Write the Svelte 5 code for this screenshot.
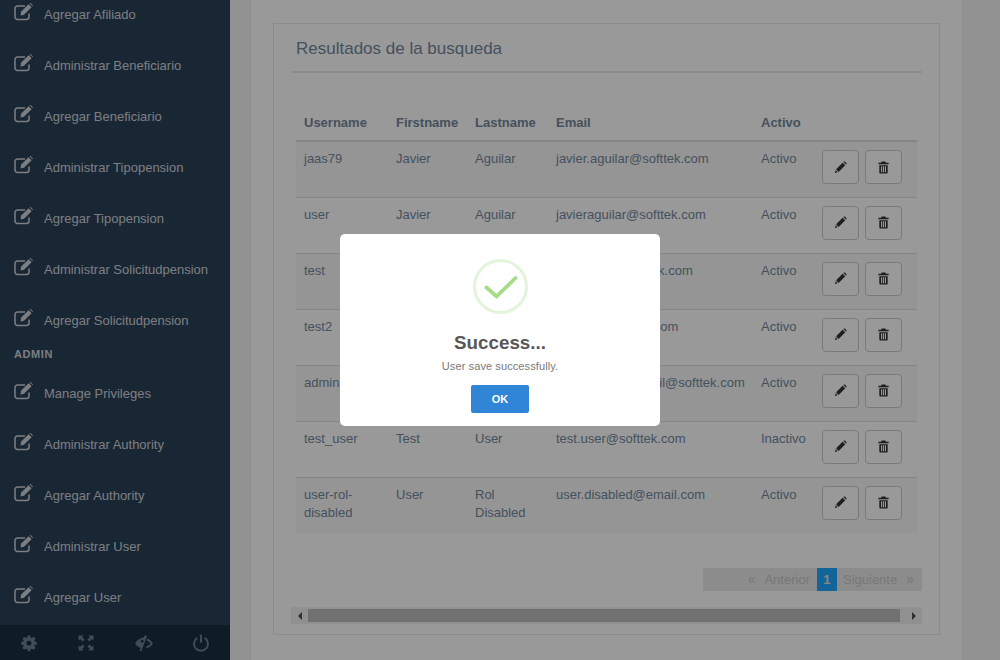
<script lang="ts">
	const topItems = [
		'Agregar Afiliado',
		'Administrar Beneficiario',
		'Agregar Beneficiario',
		'Administrar Tipopension',
		'Agregar Tipopension',
		'Administrar Solicitudpension',
		'Agregar Solicitudpension'
	];
	const adminItems = [
		'Manage Privileges',
		'Administrar Authority',
		'Agregar Authority',
		'Administrar User',
		'Agregar User'
	];
	const users = [
		{ username: 'jaas79', first: 'Javier', last: 'Aguilar', email: 'javier.aguilar@softtek.com', active: 'Activo' },
		{ username: 'user', first: 'Javier', last: 'Aguilar', email: 'javieraguilar@softtek.com', active: 'Activo' },
		{ username: 'test', first: 'Test', last: 'Test', email: 'test.tester@softtek.com', active: 'Activo' },
		{ username: 'test2', first: 'Test', last: 'Test', email: 'test2ab@softtek.com', active: 'Activo' },
		{ username: 'admin', first: 'Admin', last: 'Admin', email: 'administrator.email@softtek.com', active: 'Activo' },
		{ username: 'test_user', first: 'Test', last: 'User', email: 'test.user@softtek.com', active: 'Inactivo' },
		{ username: 'user-rol-disabled', first: 'User', last: 'Rol Disabled', email: 'user.disabled@email.com', active: 'Activo' }
	];
</script>

{#snippet editIcon()}
	<svg class="nav-icon" viewBox="0 0 20 18" aria-hidden="true">
		<path d="M15 10.5V14a2.5 2.5 0 0 1-2.5 2.5h-9A2.5 2.5 0 0 1 1 14V5.5A2.5 2.5 0 0 1 3.5 3H11" fill="none" stroke="currentColor" stroke-width="1.5" />
		<path d="M7 8.8 14.6 1.2 17.6 4.2 10 11.8 6.6 12.4Z" fill="currentColor" />
		<path d="M15.6.2 16.3-.3 18.8 2.2 18.5 3.2Z" fill="currentColor" />
	</svg>
{/snippet}

<div class="page">
	<aside class="sidebar">
		<nav class="nav">
			{#each topItems as item}
				<a class="nav-item" href="#top">{@render editIcon()}<span>{item}</span></a>
			{/each}
			<div class="nav-title">ADMIN</div>
			{#each adminItems as item}
				<a class="nav-item" href="#top">{@render editIcon()}<span>{item}</span></a>
			{/each}
		</nav>
		<div class="footer">
			<svg viewBox="0 0 24 24" aria-hidden="true">
				<path fill="currentColor" fill-rule="evenodd" d="M10 1h4l.6 3.1 1.7.7L19 3l3 3-1.8 2.7.7 1.7L24 11v4l-3.1.6-.7 1.7L22 20l-3 3-2.7-1.8-1.7.7L14 25h-4l-.6-3.1-1.7-.7L5 23l-3-3 1.8-2.7-.7-1.7L0 15v-4l3.1-.6.7-1.7L2 6l3-3 2.7 1.8 1.7-.7ZM12 9.2a3.8 3.8 0 1 0 0 7.6 3.8 3.8 0 0 0 0-7.6Z" transform="translate(1.5 1) scale(.875)" />
			</svg>
			<svg viewBox="0 0 24 24" aria-hidden="true">
				<path fill="currentColor" d="M2 2h7L6.8 4.2 10 7.4 7.4 10 4.2 6.8 2 9ZM22 2v7l-2.200-2.200L16.600 10 14 7.400 17.200 4.200 15 2ZM2 22v-7l2.200 2.200L7.400 14 10 16.600 6.800 19.800 9 22ZM22 22h-7l2.200-2.200L14 16.600 16.600 14 19.800 17.200 22 15Z" />
			</svg>
			<svg viewBox="0 0 24 24" aria-hidden="true">
				<path fill="currentColor" fill-rule="evenodd" d="M0 12.500C2.500 8.500 6.500 5.500 11.500 4.800L13.500 1.500 16 2.500 8.500 23 6 22 7.800 18.500C4.500 17.500 2 15.500 0 12.500ZM9.500 7.800a2 2 0 1 0 0 4 2 2 0 0 0 0-4Z" />
				<path fill="currentColor" d="M16.500 6C19.500 7.300 22 9.500 24 12.500 22 15.500 19.500 17.800 15.500 19L14.800 16.500C17.500 15.800 19.500 14.300 21 12.500 19.500 10.800 17.500 9.300 15.500 8.500Z" />
			</svg>
			<svg viewBox="0 0 24 24" aria-hidden="true">
				<path fill="none" stroke="currentColor" stroke-width="2.600" d="M7 5.200a9.300 9.300 0 1 0 10 0" />
				<path fill="none" stroke="currentColor" stroke-width="2.800" d="M12 1v10.500" />
			</svg>
		</div>
	</aside>

	<main class="main">
		<div class="panel">
			<section class="card">
				<h2 class="card-title">Resultados de la busqueda</h2>
				<div class="table-wrap">
					<table>
						<thead>
							<tr>
								<th class="c-user">Username</th>
								<th class="c-first">Firstname</th>
								<th class="c-last">Lastname</th>
								<th class="c-email">Email</th>
								<th class="c-active">Activo</th>
								<th></th>
							</tr>
						</thead>
						<tbody>
							{#each users as u}
								<tr>
									<td>{u.username}</td>
									<td>{u.first}</td>
									<td>{u.last}</td>
									<td>{u.email}</td>
									<td>{u.active}</td>
									<td>
										<div class="actions">
											<button type="button" aria-label="Editar">
												<svg viewBox="0 0 14 14" aria-hidden="true">
													<path fill="currentColor" d="M9.300 1.900 12.100 4.700 5 11.800 2.200 9Z" />
													<path fill="currentColor" d="M10.100 1.100 10.800.6c.3-.2.6-.2.900 0l1.700 1.700c.2.300.2.600 0 .9l-.5.700Z" />
													<path fill="currentColor" d="M1.800 9.900 4.100 12.200 1 13Z" />
												</svg>
											</button>
											<button type="button" aria-label="Borrar">
												<svg viewBox="0 0 14 14" aria-hidden="true">
													<path fill="currentColor" fill-rule="evenodd" d="M5 .5h4l.6 1.500H12.500V3.500H1.500V2H4.400ZM2.500 4.500h9V12.300c0 .7-.5 1.200-1.200 1.200H3.700c-.7 0-1.200-.5-1.200-1.200ZM4.300 5.700V12h1.200V5.700ZM6.400 5.700V12h1.200V5.700ZM8.500 5.700V12h1.200V5.700Z" />
												</svg>
											</button>
										</div>
									</td>
								</tr>
							{/each}
						</tbody>
					</table>
				</div>
				<div class="pager">
					<span class="pg pg-arrow">«</span>
					<span class="pg pg-prev">Anterior</span>
					<span class="pg pg-on">1</span>
					<span class="pg pg-next">Siguiente</span>
					<span class="pg pg-arrow pg-last">»</span>
				</div>
				<div class="scrollbar">
					<span class="arrow arrow-left"></span>
					<span class="thumb"></span>
					<span class="arrow arrow-right"></span>
				</div>
			</section>
		</div>
	</main>
</div>

<div class="backdrop">
	<div class="modal" role="dialog">
		<svg class="check" viewBox="0 0 55 55" aria-hidden="true">
			<circle cx="27.500" cy="27.500" r="26" fill="none" stroke="#e3f4da" stroke-width="3" />
			<path d="M13.500 28.500 23.500 37.500 42.500 19" fill="none" stroke="#a5dc86" stroke-width="3.800" stroke-linecap="round" />
		</svg>
		<h1>Success...</h1>
		<p>User save successfully.</p>
		<button type="button" class="ok">OK</button>
	</div>
</div>

<style>
	:global(body) {
		margin: 0;
		background: #f4f4f4;
		font-family: 'Liberation Sans', Arial, sans-serif;
		overflow: hidden;
	}
	.page {
		display: flex;
		width: 1000px;
		height: 660px;
		overflow: hidden;
	}
	.sidebar {
		width: 230px;
		flex: none;
		height: 660px;
		display: flex;
		flex-direction: column;
		background: #2b4158;
	}
	.nav {
		flex: 1;
		min-height: 0;
		overflow: hidden;
		display: flex;
		flex-direction: column;
		justify-content: flex-end;
		padding-bottom: 2px;
	}
	.nav-item {
		flex: none;
		height: 51px;
		display: flex;
		align-items: center;
		padding-left: 14px;
		color: #cfd3d8;
		font-size: 13px;
		text-decoration: none;
		box-sizing: border-box;
	}
	.nav-item span {
		margin-left: 10px;
	}
	.nav-icon {
		width: 20px;
		height: 18px;
		margin-top: -5px;
	}
	.nav-title {
		flex: none;
		height: 22px;
		line-height: 17px;
		padding: 0 0 5px 14px;
		box-sizing: border-box;
		font-size: 11px;
		font-weight: 700;
		letter-spacing: 0.6px;
		color: #cfd3d8;
	}
	.footer {
		flex: none;
		height: 35px;
		background: #1a2f44;
		display: grid;
		grid-template-columns: repeat(4, 1fr);
		align-items: center;
		justify-items: center;
		color: #6b7f93;
	}
	.footer svg {
		width: 18px;
		height: 18px;
	}
	.main {
		flex: 1;
		min-width: 0;
		padding-left: 20px;
	}
	.panel {
		width: 713px;
		height: 700px;
		box-sizing: border-box;
		background: #fff;
		border: 1px solid #e6e9ed;
		border-top: 0;
		padding: 23px 22px 0 22px;
	}
	.card {
		box-sizing: border-box;
		height: 612px;
		border: 1px solid #e6e9ed;
		padding: 0 17px;
	}
	.card-title {
		margin: 0;
		height: 47px;
		line-height: 49px;
		padding-left: 5px;
		border-bottom: 2px solid #e6e9ed;
		font-size: 17px;
		font-weight: 400;
		color: #73879c;
	}
	.table-wrap {
		padding: 31px 5px 0;
		height: 495px;
		box-sizing: border-box;
	}
	table {
		border-collapse: collapse;
		width: 621px;
		table-layout: fixed;
		font-size: 13px;
		color: #73879c;
	}
	th {
		text-align: left;
		font-weight: 700;
		height: 37px;
		padding: 0 8px;
		border-bottom: 2px solid #ddd;
		box-sizing: border-box;
	}
	.c-user { width: 92px; }
	.c-first { width: 79px; }
	.c-last { width: 81px; }
	.c-email { width: 205px; }
	.c-active { width: 61px; }
	td {
		height: 56px;
		box-sizing: border-box;
		padding: 8px;
		vertical-align: top;
		line-height: 18px;
		border-top: 1px solid #ddd;
	}
	tbody tr:first-child td {
		border-top: 0;
	}
	tbody tr:nth-child(odd) {
		background: #f9f9f9;
	}
	.actions {
		display: flex;
		gap: 6px;
	}
	.actions button {
		width: 37px;
		height: 34px;
		flex: none;
		padding: 0;
		background: #fff;
		border: 1px solid #ccc;
		border-radius: 4px;
		color: #333;
		display: flex;
		align-items: center;
		justify-content: center;
	}
	.actions svg {
		width: 13px;
		height: 13px;
	}
	.pager {
		height: 23px;
		display: flex;
		justify-content: flex-end;
		background: #e9e9e9;
		margin-left: 412px;
		font-size: 13px;
		line-height: 23px;
		color: #c8c8c8;
	}
	.pg-arrow {
		font-size: 14px;
		padding: 0 9px;
	}
	.pg-last {
		padding-right: 8px;
	}
	.pg-prev {
		padding-right: 7px;
	}
	.pg-next {
		padding-left: 6px;
	}
	.pg-on {
		width: 20px;
		text-align: center;
		background: #21a7ff;
		color: #e0e0e0;
		font-weight: 700;
	}
	.scrollbar {
		margin-top: 16px;
		height: 17px;
		background: #f1f1f1;
		display: flex;
		align-items: center;
	}
	.arrow {
		width: 17px;
		display: flex;
		justify-content: center;
	}
	.arrow::before {
		content: '';
		border-top: 4px solid transparent;
		border-bottom: 4px solid transparent;
	}
	.arrow-left::before {
		border-right: 4px solid #505050;
	}
	.arrow-right::before {
		border-left: 4px solid #505050;
	}
	.thumb {
		flex: none;
		width: 592px;
		height: 13px;
		background: #bcbcbc;
	}
	.arrow-right {
		margin-left: auto;
	}
	.backdrop {
		position: fixed;
		inset: 0;
		background: rgba(0, 0, 0, 0.4);
		display: flex;
		align-items: flex-start;
		justify-content: center;
	}
	.modal {
		margin-top: 234px;
		width: 320px;
		height: 192px;
		box-sizing: border-box;
		background: #fff;
		border-radius: 5px;
		padding-top: 25px;
		display: flex;
		flex-direction: column;
		align-items: center;
		text-align: center;
	}
	.check {
		width: 55px;
		height: 55px;
		flex: none;
	}
	.modal h1 {
		margin: 18px 0 0;
		font-size: 18.8px;
		line-height: 22px;
		font-weight: 700;
		color: #575757;
	}
	.modal p {
		margin: 5px 0 0;
		font-size: 11px;
		line-height: 14px;
		letter-spacing: 0.1px;
		color: #797979;
	}
	.ok {
		margin-top: 12px;
		width: 58px;
		height: 28px;
		border: 0;
		border-radius: 2px;
		background: #3085d6;
		color: #fff;
		font: 700 11px 'Liberation Sans', Arial, sans-serif;
	}
</style>
